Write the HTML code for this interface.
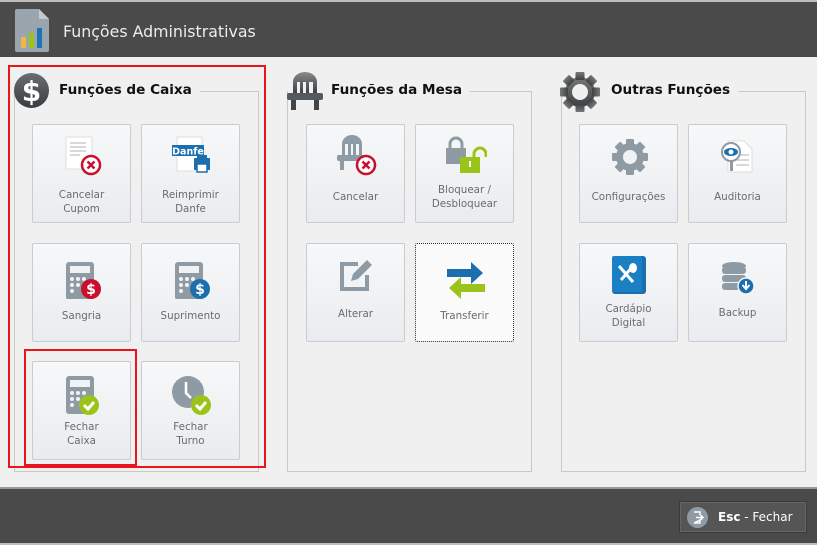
<!DOCTYPE html>
<html><head><meta charset="utf-8"><style>
*{margin:0;padding:0;box-sizing:border-box}
body{width:817px;height:545px;background:#f0f0f0;position:relative;overflow:hidden;font-family:"DejaVu Sans","Liberation Sans",sans-serif}
.hdr{position:absolute;left:0;top:0;width:817px;height:57px;background:#4a4a4a;border-top:2px solid #bdbdbd}
.hdr .t{position:absolute;left:63px;top:20px;color:#ececec;font-size:15.8px}
.ftr{position:absolute;left:0;top:487px;width:817px;height:58px;background:#4a4a4a;border-top:2px solid #9a9a9a;border-bottom:2px solid #bdbdbd}
.esc{position:absolute;left:679px;top:12px;width:128px;height:32px;background:#555;border:1px solid #3a3a3a;box-shadow:inset 0 0 0 1px #666;color:#fff;font-size:12px}
.esc span{position:absolute;left:38px;top:8px}
.gb{position:absolute;border:1px solid #c8c8c8;border-top:none}
.gl{position:absolute;height:1px;background:#c8c8c8}
.gt{position:absolute;font-weight:bold;font-size:13.6px;color:#111;font-family:"DejaVu Sans",sans-serif}
.btn{position:absolute;width:99px;height:99px;border:1px solid #c9cdd2;border-radius:2px;background:linear-gradient(#f7f8f9,#e9ecef);}
.btn svg{position:absolute;left:29px;top:10px}
.btn .l{position:absolute;left:0;width:100%;text-align:center;color:#6b6b6b;font-size:10.3px;line-height:14px}
.red{position:absolute;border:2px solid #e8151d}
</style></head><body>
<div class="hdr">
<svg style="position:absolute;left:15px;top:7px" width="34" height="43" viewBox="0 0 34 43"><path d="M2 0h22l10 10v31a2 2 0 0 1-2 2H2a2 2 0 0 1-2-2V2a2 2 0 0 1 2-2z" fill="#9aa5ad"/><path d="M24 0v10h10z" fill="#c3cad0"/><rect x="6" y="28" width="5" height="11" fill="#f3b44b"/><rect x="14" y="24" width="5" height="15" fill="#9bc41b"/><rect x="22" y="19" width="5" height="20" fill="#1b74b8"/></svg>
<div class="t">Funções Administrativas</div>
</div>

<!-- group 1 -->
<div class="gb" style="left:14px;top:91px;width:245px;height:381px"></div>
<div class="gl" style="left:199px;top:91px;width:60px"></div>
<svg style="position:absolute;left:14px;top:73px" width="35" height="35" viewBox="0 0 35 35"><defs><linearGradient id="g1" x1="0" y1="0" x2="0" y2="1"><stop offset="0" stop-color="#6a6e72"/><stop offset="1" stop-color="#3a3d40"/></linearGradient></defs><circle cx="17.5" cy="17.5" r="17.5" fill="url(#g1)"/><text x="17.5" y="28" text-anchor="middle" font-size="28" font-weight="bold" fill="#fff" font-family="DejaVu Sans">$</text></svg>
<div class="gt" style="left:59px;top:82px;background:#f0f0f0;padding-right:8px">Funções de Caixa</div>

<div class="btn" style="left:32px;top:124px"><svg width="40" height="45" viewBox="0 0 40 45"><rect x="4" y="2" width="26" height="32" fill="#fff" stroke="#ddd"/><g stroke="#ccc" stroke-width="1.5"><path d="M8 8h16M8 12h16M8 16h16M8 20h10"/></g><circle cx="29" cy="30" r="9" fill="#fff" stroke="#c8102e" stroke-width="2.5"/><path d="M25.5 26.5l7 7M32.5 26.5l-7 7" stroke="#c8102e" stroke-width="2.5"/></svg><div class="l" style="top:63px">Cancelar<br>Cupom</div></div>
<div class="btn" style="left:141px;top:124px"><svg width="42" height="45" viewBox="0 0 42 45"><rect x="6" y="2" width="25" height="34" fill="#fff" stroke="#ddd"/><rect x="1" y="10" width="32" height="11" fill="#1b6fae"/><text x="17" y="19.5" text-anchor="middle" font-size="9.5" font-weight="bold" fill="#fff" font-family="DejaVu Sans">Danfe</text><rect x="23" y="23" width="16" height="12" rx="1" fill="#1b6fae"/><rect x="26" y="29" width="10" height="8" fill="#fff" stroke="#1b6fae" stroke-width="1.5"/><rect x="26" y="20" width="10" height="4" fill="#1b6fae"/></svg><div class="l" style="top:63px">Reimprimir<br>Danfe</div></div>

<div class="btn" style="left:32px;top:243px"><svg width="40" height="45" viewBox="0 0 40 45"><rect x="4" y="8" width="28" height="38" rx="3" fill="#8f9ba4"/><rect x="8" y="12" width="20" height="7" fill="#f0f2f4"/><g fill="#f0f2f4"><circle cx="10" cy="25" r="2"/><circle cx="16" cy="25" r="2"/><circle cx="22" cy="25" r="2"/><circle cx="10" cy="31" r="2"/><circle cx="16" cy="31" r="2"/><circle cx="10" cy="37" r="2"/></g><circle cx="29" cy="35" r="10" fill="#c8102e"/><text x="29" y="40" text-anchor="middle" font-size="14" font-weight="bold" fill="#fff" font-family="DejaVu Sans">$</text></svg><div class="l" style="top:65px">Sangria</div></div>
<div class="btn" style="left:141px;top:243px"><svg width="40" height="45" viewBox="0 0 40 45"><rect x="4" y="8" width="28" height="38" rx="3" fill="#8f9ba4"/><rect x="8" y="12" width="20" height="7" fill="#f0f2f4"/><g fill="#f0f2f4"><circle cx="10" cy="25" r="2"/><circle cx="16" cy="25" r="2"/><circle cx="22" cy="25" r="2"/><circle cx="10" cy="31" r="2"/><circle cx="16" cy="31" r="2"/><circle cx="10" cy="37" r="2"/></g><circle cx="29" cy="35" r="10" fill="#1b6fae"/><text x="29" y="40" text-anchor="middle" font-size="14" font-weight="bold" fill="#fff" font-family="DejaVu Sans">$</text></svg><div class="l" style="top:65px">Suprimento</div></div>

<div class="btn" style="left:32px;top:361px"><svg width="40" height="45" viewBox="0 0 40 45"><rect x="4" y="4" width="28" height="38" rx="3" fill="#8f9ba4"/><rect x="8" y="8" width="20" height="7" fill="#f0f2f4"/><g fill="#f0f2f4"><circle cx="10" cy="21" r="2"/><circle cx="16" cy="21" r="2"/><circle cx="22" cy="21" r="2"/><circle cx="10" cy="27" r="2"/><circle cx="16" cy="27" r="2"/><circle cx="10" cy="33" r="2"/></g><circle cx="27" cy="33" r="10" fill="#9bc41b"/><path d="M22 33l4 4 6-7" stroke="#fff" stroke-width="3" fill="none"/></svg><div class="l" style="top:58px">Fechar<br>Caixa</div></div>
<div class="btn" style="left:141px;top:361px"><svg width="40" height="45" viewBox="0 0 40 45"><circle cx="17" cy="20" r="16" fill="#8f9ba4"/><path d="M15 10v11l5 5" stroke="#fff" stroke-width="2.5" fill="none"/><circle cx="30" cy="33" r="10" fill="#9bc41b"/><path d="M25 33l4 4 6-7" stroke="#fff" stroke-width="3" fill="none"/></svg><div class="l" style="top:58px">Fechar<br>Turno</div></div>

<!-- group 2 -->
<div class="gb" style="left:287px;top:91px;width:245px;height:381px"></div>
<div class="gl" style="left:466px;top:91px;width:66px"></div>
<svg style="position:absolute;left:286px;top:71px" width="38" height="40" viewBox="0 0 38 40"><defs><linearGradient id="g2" x1="0" y1="0" x2="0" y2="1"><stop offset="0" stop-color="#888"/><stop offset="1" stop-color="#3e4144"/></linearGradient></defs><path d="M7 22V11a12 10 0 0 1 24 0v11h-4V11h-4v11h-3V11h-3v11h-3V11h-3v11z" fill="url(#g2)"/><rect x="1" y="22" width="36" height="7" rx="2" fill="#555a5e"/><rect x="5" y="29" width="5" height="10" fill="#444"/><rect x="28" y="29" width="5" height="10" fill="#444"/></svg>
<div class="gt" style="left:331px;top:82px;background:#f0f0f0;padding-right:8px">Funções da Mesa</div>

<div class="btn" style="left:306px;top:124px"><svg width="42" height="45" viewBox="0 0 42 45"><path d="M6 20V9a10 9 0 0 1 20 0v11h-3V9h-3v11h-3V9h-2v11h-3V9h-3v11z" fill="#8f9ba4"/><rect x="1" y="20" width="28" height="6" rx="2" fill="#8f9ba4"/><rect x="4" y="26" width="4" height="9" fill="#8f9ba4"/><circle cx="30" cy="30" r="9" fill="#fff" stroke="#c8102e" stroke-width="2.5"/><path d="M26.5 26.5l7 7M33.5 26.5l-7 7" stroke="#c8102e" stroke-width="2.5"/></svg><div class="l" style="top:65px">Cancelar</div></div>
<div class="btn" style="left:415px;top:124px"><svg width="42" height="45" viewBox="0 0 42 45"><path d="M5 13V9a6 6 0 0 1 12 0v4" stroke="#8f9ba4" stroke-width="3" fill="none"/><rect x="1" y="13" width="20" height="16" fill="#8f9ba4"/><path d="M29 23v-4a6 6 0 0 1 12 0v3" stroke="#9bc41b" stroke-width="3" fill="none"/><rect x="15" y="22" width="20" height="16" fill="#9bc41b"/><rect x="24" y="26" width="2" height="6" fill="#fff"/></svg><div class="l" style="top:58px">Bloquear /<br>Desbloquear</div></div>

<div class="btn" style="left:306px;top:243px"><svg width="42" height="45" viewBox="0 0 42 45"><path d="M22 10H6v25h25V21" stroke="#8f9ba4" stroke-width="4" fill="none"/><path d="M15 27l2-7 14-14 5 5-14 14z" fill="#8f9ba4"/></svg><div class="l" style="top:63px">Alterar</div></div>
<div class="btn" style="left:415px;top:243px;border:1px dotted #333;background:#fafafa"><svg width="42" height="45" viewBox="0 0 42 45"><path d="M2 15h24v-7l12 11-12 11v-7H2z" fill="#1b6fae"/><path d="M40 30H16v-7L4 34l12 11v-7h24z" fill="#9bc41b"/></svg><div class="l" style="top:65px">Transferir</div></div>

<!-- group 3 -->
<div class="gb" style="left:561px;top:91px;width:245px;height:381px"></div>
<div class="gl" style="left:736px;top:91px;width:70px"></div>
<svg style="position:absolute;left:558px;top:71px" width="44" height="42" viewBox="-22 -21 44 42"><defs><linearGradient id="g3" x1="0" y1="0" x2="0" y2="1"><stop offset="0" stop-color="#777"/><stop offset="1" stop-color="#3e4144"/></linearGradient></defs><g fill="url(#g3)"><circle r="15"/><g id="tt"><rect x="-4.5" y="-20" width="9" height="8" rx="1"/></g><use href="#tt" transform="rotate(45)"/><use href="#tt" transform="rotate(90)"/><use href="#tt" transform="rotate(135)"/><use href="#tt" transform="rotate(180)"/><use href="#tt" transform="rotate(225)"/><use href="#tt" transform="rotate(270)"/><use href="#tt" transform="rotate(315)"/></g><circle r="8" fill="#f0f0f0"/></svg>
<div class="gt" style="left:611px;top:82px;background:#f0f0f0;padding-right:8px">Outras Funções</div>

<div class="btn" style="left:579px;top:124px"><svg width="42" height="45" viewBox="-21 -22 42 45"><g fill="#8f9ba4"><circle r="14"/><g id="t2"><rect x="-4" y="-18" width="8" height="7" rx="1"/></g><use href="#t2" transform="rotate(45)"/><use href="#t2" transform="rotate(90)"/><use href="#t2" transform="rotate(135)"/><use href="#t2" transform="rotate(180)"/><use href="#t2" transform="rotate(225)"/><use href="#t2" transform="rotate(270)"/><use href="#t2" transform="rotate(315)"/></g><circle r="7" fill="#f0f2f4"/></svg><div class="l" style="top:65px">Configurações</div></div>
<div class="btn" style="left:688px;top:124px"><svg width="42" height="45" viewBox="0 0 42 45"><path d="M10 6h16l8 8v23H10z" fill="#fff" stroke="#ddd"/><g stroke="#ccc" stroke-width="1.5"><path d="M18 20h13M18 25h13M18 30h13"/></g><rect x="12" y="24" width="3" height="12" fill="#8f9ba4"/><circle cx="13" cy="17" r="9" fill="#fff" stroke="#8f9ba4" stroke-width="2"/><ellipse cx="13" cy="17" rx="7" ry="4" fill="#1b6fae"/><circle cx="13" cy="17" r="2.5" fill="#fff"/></svg><div class="l" style="top:65px">Auditoria</div></div>

<div class="btn" style="left:579px;top:243px"><svg width="42" height="45" viewBox="0 0 42 45"><rect x="3" y="2" width="34" height="38" rx="3" fill="#1b6fae"/><rect x="3" y="2" width="30" height="36" rx="2" fill="#1b7fc4"/><path d="M10 12l14 16M24 12L12 26" stroke="#fff" stroke-width="3"/><ellipse cx="24" cy="14" rx="4" ry="5" fill="#fff"/></svg><div class="l" style="top:58px">Cardápio<br>Digital</div></div>
<div class="btn" style="left:688px;top:243px"><svg width="42" height="45" viewBox="0 0 42 45"><g fill="#8f9ba4"><ellipse cx="16" cy="12" rx="12" ry="4"/><rect x="4" y="13" width="24" height="7" rx="3"/><rect x="4" y="21" width="24" height="7" rx="3"/><rect x="4" y="29" width="24" height="7" rx="3"/></g><circle cx="28" cy="32" r="8" fill="#1b6fae" stroke="#f0f2f4" stroke-width="1.5"/><path d="M28 27v7M24.5 31l3.5 4 3.5-4" stroke="#fff" stroke-width="2" fill="none"/></svg><div class="l" style="top:62px">Backup</div></div>

<div class="red" style="left:8px;top:65px;width:258px;height:403px"></div>
<div class="red" style="left:24px;top:349px;width:113px;height:117px"></div>

<div class="ftr"><div class="esc"><svg style="position:absolute;left:7px;top:5px" width="21" height="21" viewBox="0 0 21 21"><circle cx="10.5" cy="10.5" r="10.5" fill="#8f9ba4"/><path d="M7 5h6v3M13 13v3H7z" stroke="#fff" stroke-width="1.5" fill="none"/><path d="M9 10.5h7M13.5 8l2.5 2.5-2.5 2.5" stroke="#fff" stroke-width="1.5" fill="none"/></svg><span><b>Esc</b> - Fechar</span></div></div>
</body></html>
